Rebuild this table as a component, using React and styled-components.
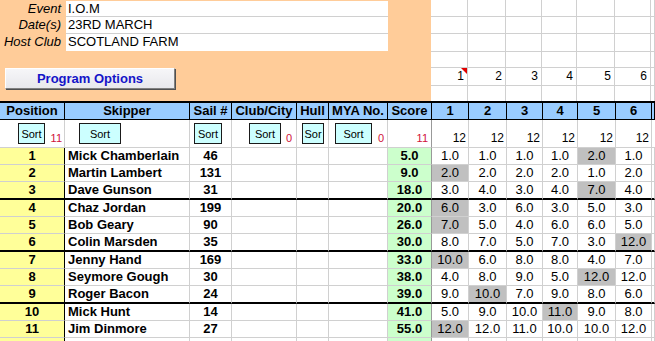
import React from 'react';
import styled, { createGlobalStyle } from 'styled-components';

const COLS = '65px 125px 42px 65px 32px 59px 44px 37px 38px 36px 35px 38px 36px 1fr';
const RACE_COLS = '37px 38px 36px 35px 38px 36px 1fr';
const GRID = '#d0d0d0';

const GlobalStyle = createGlobalStyle`
  html, body { margin: 0; padding: 0; background: #fff; }
  body { font-family: "Liberation Sans", Arial, sans-serif; color: #000; }
  * { box-sizing: border-box; }
`;

const Sheet = styled.div`
  width: 655px;
  height: 341px;
  overflow: hidden;
  background: #fff;
`;

const Top = styled.div`
  display: flex;
  height: 101px;
`;

const OrangePanel = styled.div`
  width: 432px;
  background: #ffcc99;
  padding-top: 1px;
  display: flex;
  flex-direction: column;
`;

const InfoGrid = styled.div`
  display: grid;
  grid-template-columns: 66px 322px;
  grid-template-rows: 16px 17px 17px;
`;

const InfoLabel = styled.div`
  font-size: 13px;
  font-style: italic;
  text-align: right;
  padding-right: 5px;
  line-height: 16px;
`;

const InfoValue = styled.div`
  background: #fff;
  font-size: 13px;
  line-height: 16px;
  padding-left: 2px;
  border-bottom: ${(p) => (p.$last ? 'none' : `1px solid ${GRID}`)};
`;

const ProgramButton = styled.button`
  margin: 17px 0 0 5px;
  width: 170px;
  height: 21px;
  padding: 0;
  background: linear-gradient(#f6f6f8, #e8e8ec);
  border: 1px solid;
  border-color: #ffffff #808080 #808080 #ffffff;
  box-shadow: 1px 1px 0 #505050;
  font-family: "Liberation Sans", Arial, sans-serif;
  font-weight: bold;
  font-size: 13px;
  color: #1414c8;
  cursor: pointer;
`;

const RightTop = styled.div`
  flex: 1;
  display: grid;
  grid-template-columns: ${RACE_COLS};
  grid-template-rows: 17px 17px 18px 16px 18px 15px;
`;

const BlankCell = styled.div`
  position: relative;
  border-right: 1px solid ${GRID};
  border-bottom: ${(p) => (p.$last ? 'none' : `1px solid ${GRID}`)};
  font-size: 12px;
  line-height: 17px;
  text-align: right;
  padding-right: 3px;
`;

const CommentMark = styled.span`
  position: absolute;
  top: 0;
  right: 0;
  width: 0;
  height: 0;
  border-top: 6px solid #e00000;
  border-left: 6px solid transparent;
`;

const HeaderRow = styled.div`
  display: grid;
  grid-template-columns: ${COLS};
  height: 19px;
  border-top: 2px solid #000;
`;

const HeaderCell = styled.div`
  background: #99ccff;
  border-right: 1px solid #000;
  border-bottom: 1px solid #000;
  font-weight: bold;
  font-size: 13px;
  line-height: 16px;
  text-align: center;
  white-space: nowrap;
  overflow: hidden;
`;

const SortRow = styled.div`
  display: grid;
  grid-template-columns: ${COLS};
  height: 28px;
`;

const SortCell = styled.div`
  position: relative;
  border-right: 1px solid ${(p) => p.$edge || GRID};
  border-bottom: 1px solid ${GRID};
  display: flex;
  justify-content: flex-end;
  align-items: flex-end;
  padding: 0 ${(p) => p.$pad ?? 3}px 2px 0;
  font-size: ${(p) => (p.$red ? 11 : 12)}px;
  line-height: 13px;
  color: ${(p) => (p.$red ? '#d0103a' : '#000')};
`;

const SortButton = styled.button`
  position: absolute;
  top: 3px;
  left: ${(p) => p.$left}px;
  width: ${(p) => p.$w}px;
  height: 21px;
  padding: 0;
  background: #ccffff;
  border: 1px solid #1a1a1a;
  font-family: "Liberation Sans", Arial, sans-serif;
  font-size: 11px;
  color: #000;
  overflow: hidden;
  white-space: nowrap;
`;

const DataRow = styled.div`
  display: grid;
  grid-template-columns: ${COLS};
  height: ${(p) => (p.$thick ? 18 : 17)}px;
`;

const DataCell = styled.div`
  background: ${(p) => p.$bg || '#fff'};
  border-right: 1px solid ${(p) => p.$edge || GRID};
  border-bottom: ${(p) => (p.$thick ? '2px solid #000' : `1px solid ${GRID}`)};
  font-size: 13px;
  line-height: 16px;
  font-weight: ${(p) => (p.$bold ? 'bold' : 'normal')};
  text-align: ${(p) => p.$align || 'center'};
  padding-left: ${(p) => (p.$align === 'left' ? 3 : 0)}px;
  white-space: nowrap;
  overflow: hidden;
`;

const results = [
  [1, 'Mick Chamberlain', 46, '5.0', ['1.0', '1.0', '1.0', '1.0', '2.0', '1.0'], 4],
  [2, 'Martin Lambert', 131, '9.0', ['2.0', '2.0', '2.0', '2.0', '1.0', '2.0'], 0],
  [3, 'Dave Gunson', 31, '18.0', ['3.0', '4.0', '3.0', '4.0', '7.0', '4.0'], 4],
  [4, 'Chaz Jordan', 199, '20.0', ['6.0', '3.0', '6.0', '3.0', '5.0', '3.0'], 0],
  [5, 'Bob Geary', 90, '26.0', ['7.0', '5.0', '4.0', '6.0', '6.0', '5.0'], 0],
  [6, 'Colin Marsden', 35, '30.0', ['8.0', '7.0', '5.0', '7.0', '3.0', '12.0'], 5],
  [7, 'Jenny Hand', 169, '33.0', ['10.0', '6.0', '8.0', '8.0', '4.0', '7.0'], 0],
  [8, 'Seymore Gough', 30, '38.0', ['4.0', '8.0', '9.0', '5.0', '12.0', '12.0'], 4],
  [9, 'Roger Bacon', 24, '39.0', ['9.0', '10.0', '7.0', '9.0', '8.0', '6.0'], 1],
  [10, 'Mick Hunt', 14, '41.0', ['5.0', '9.0', '10.0', '11.0', '9.0', '8.0'], 3],
  [11, 'Jim Dinmore', 27, '55.0', ['12.0', '12.0', '11.0', '10.0', '10.0', '12.0'], 0],
];

const headers = ['Position', 'Skipper', 'Sail #', 'Club/City', 'Hull', 'MYA No.', 'Score', '1', '2', '3', '4', '5', '6', ''];

const TOP_ROWS = 6;

export default function App() {
  return (
    <Sheet>
      <GlobalStyle />
      <Top>
        <OrangePanel>
          <InfoGrid>
            <InfoLabel>Event</InfoLabel>
            <InfoValue>I.O.M</InfoValue>
            <InfoLabel>Date(s)</InfoLabel>
            <InfoValue>23RD MARCH</InfoValue>
            <InfoLabel>Host Club</InfoLabel>
            <InfoValue $last>SCOTLAND FARM</InfoValue>
          </InfoGrid>
          <ProgramButton>Program Options</ProgramButton>
        </OrangePanel>
        <RightTop>
          {Array.from({ length: TOP_ROWS }).map((_, r) =>
            Array.from({ length: 7 }).map((__, c) => (
              <BlankCell key={`${r}-${c}`} $last={r === TOP_ROWS - 1}>
                {r === 4 && c < 6 ? c + 1 : null}
                {r === 4 && c === 0 ? <CommentMark /> : null}
              </BlankCell>
            ))
          )}
        </RightTop>
      </Top>

      <HeaderRow>
        {headers.map((h, i) => (
          <HeaderCell key={i}>{h}</HeaderCell>
        ))}
      </HeaderRow>

      <SortRow>
        <SortCell $red $pad={2}>
          <SortButton $left={18} $w={27}>Sort</SortButton>
          11
        </SortCell>
        <SortCell>
          <SortButton $left={14} $w={42}>Sort</SortButton>
        </SortCell>
        <SortCell>
          <SortButton $left={4} $w={28}>Sort</SortButton>
        </SortCell>
        <SortCell $red $pad={4}>
          <SortButton $left={17} $w={32}>Sort</SortButton>
          0
        </SortCell>
        <SortCell>
          <SortButton $left={5} $w={22}>Sor</SortButton>
        </SortCell>
        <SortCell $red>
          <SortButton $left={6} $w={37}>Sort</SortButton>
          0
        </SortCell>
        <SortCell $red $edge="#999">11</SortCell>
        {[0, 1, 2, 3, 4, 5].map((i) => (
          <SortCell key={i} $pad={2}>12</SortCell>
        ))}
        <SortCell />
      </SortRow>

      {results.map(([pos, name, sail, score, races, drop], idx) => {
        const thick = idx === 2 || idx === 5 || idx === 8;
        return (
          <DataRow key={pos} $thick={thick}>
            <DataCell $thick={thick} $bg="#ffff99" $edge="#000" $bold>{pos}</DataCell>
            <DataCell $thick={thick} $bold $align="left">{name}</DataCell>
            <DataCell $thick={thick} $bold>{sail}</DataCell>
            <DataCell $thick={thick} />
            <DataCell $thick={thick} />
            <DataCell $thick={thick} />
            <DataCell $thick={thick} $bg="#ccffcc" $edge="#999" $bold>{score}</DataCell>
            {races.map((v, i) => (
              <DataCell key={i} $thick={thick} $bg={i === drop ? '#c0c0c0' : '#fff'}>{v}</DataCell>
            ))}
            <DataCell $thick={thick} />
          </DataRow>
        );
      })}
      <DataRow>
        <DataCell $bg="#ffff99" $edge="#000" />
        <DataCell />
        <DataCell />
        <DataCell />
        <DataCell />
        <DataCell />
        <DataCell $bg="#ccffcc" $edge="#999" />
        {[0, 1, 2, 3, 4, 5, 6].map((i) => (
          <DataCell key={i} />
        ))}
      </DataRow>
    </Sheet>
  );
}
